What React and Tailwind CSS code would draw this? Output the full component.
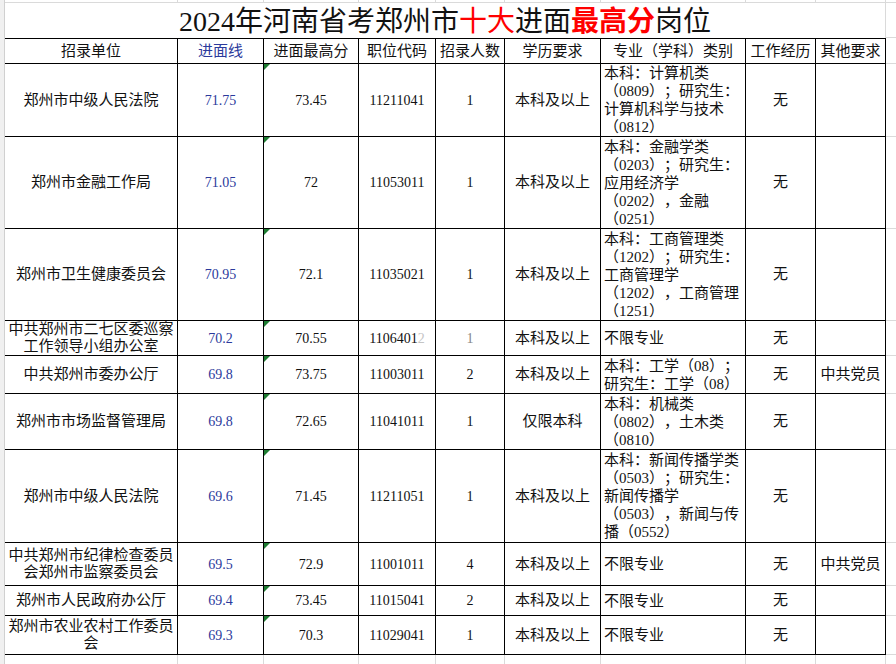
const cols = ["w-[173px]", "w-[86px]", "w-[95px]", "w-[77px]", "w-[69px]", "w-[96px]", "w-[145px]", "w-[70px]", "w-[70px]"];

const headers = ["招录单位", "进面线", "进面最高分", "职位代码", "招录人数", "学历要求", "专业（学科）类别", "工作经历", "其他要求"];

const rows = [
    { h: "h-[73px]", unit: ["郑州市中级人民法院"], line: "71.75", max: "73.45", code: "11211041", n: "1", edu: "本科及以上", major: ["本科：计算机类", "（0809）；研究生：", "计算机科学与技术", "（0812）"], other: "" },
    { h: "h-[92px]", unit: ["郑州市金融工作局"], line: "71.05", max: "72", code: "11053011", n: "1", edu: "本科及以上", major: ["本科：金融学类", "（0203）；研究生：", "应用经济学", "（0202），金融", "（0251）"], other: "" },
    { h: "h-[92px]", unit: ["郑州市卫生健康委员会"], line: "70.95", max: "72.1", code: "11035021", n: "1", edu: "本科及以上", major: ["本科：工商管理类", "（1202）；研究生：", "工商管理学", "（1202），工商管理", "（1251）"], other: "" },
    { h: "h-[35px]", unit: ["中共郑州市二七区委巡察", "工作领导小组办公室"], line: "70.2", max: "70.55", code: "1106401", codeFade: "2", n: "1", nFade: true, edu: "本科及以上", major: ["不限专业"], other: "" },
    { h: "h-[38px]", unit: ["中共郑州市委办公厅"], line: "69.8", max: "73.75", code: "11003011", n: "2", edu: "本科及以上", major: ["本科：工学（08）；", "研究生：工学（08）"], other: "中共党员" },
    { h: "h-[56px]", unit: ["郑州市市场监督管理局"], line: "69.8", max: "72.65", code: "11041011", n: "1", edu: "仅限本科", major: ["本科：机械类", "（0802），土木类", "（0810）"], other: "" },
    { h: "h-[93px]", unit: ["郑州市中级人民法院"], line: "69.6", max: "71.45", code: "11211051", n: "1", edu: "本科及以上", major: ["本科：新闻传播学类", "（0503）；研究生：", "新闻传播学", "（0503），新闻与传", "播（0552）"], other: "" },
    { h: "h-[43px]", unit: ["中共郑州市纪律检查委员", "会郑州市监察委员会"], line: "69.5", max: "72.9", code: "11001011", n: "4", edu: "本科及以上", major: ["不限专业"], other: "中共党员" },
    { h: "h-[30px]", unit: ["郑州市人民政府办公厅"], line: "69.4", max: "73.45", code: "11015041", n: "2", edu: "本科及以上", major: ["不限专业"], other: "" },
    { h: "h-[39px]", unit: ["郑州市农业农村工作委员", "会"], line: "69.3", max: "70.3", code: "11029041", n: "1", edu: "本科及以上", major: ["不限专业"], other: "" },
];

const GridRow = ({ h }) => (
    <div className={`flex shrink-0 ${h}`}>
        {cols.map((w, i) => (
            <div key={i} className={`${w} shrink-0 border-r border-b border-[#dadada]`} />
        ))}
        <div className="w-[10px] shrink-0 border-b border-[#dadada]" />
    </div>
);

const App = () => {
    const cell = "shrink-0 border-r border-b border-black flex items-center justify-center";
    return (
        <div className="w-[896px] h-[664px] overflow-hidden bg-white flex text-[#111] [text-spacing-trim:space-all] font-['Liberation_Serif','Noto_Sans_CJK_SC',serif]">
            {/* row header strip */}
            <div className="w-[5px] shrink-0 bg-[#f0f0f0] border-r border-[#d0d0d0]" />

            <div className="flex flex-col w-[891px]">
                {/* top gridline strip */}
                <GridRow h="h-[3px]" />

                {/* title */}
                <div className="flex shrink-0 h-[35px]">
                    <div className="w-[881px] shrink-0 border-r border-[#dadada] flex items-center justify-center text-[28px] leading-none pt-[2px]">
                        <span>2024年河南省考郑州市</span>
                        <span className="text-[#ff0000]">十大</span>
                        <span>进面</span>
                        <span className="text-[#ff0000] font-bold">最高分</span>
                        <span>岗位</span>
                    </div>
                    <div className="w-[10px] shrink-0 border-b border-[#dadada]" />
                </div>

                {/* header */}
                <div className="flex shrink-0 h-[26px]">
                    {headers.map((t, i) => (
                        <div key={i} className={`${cols[i]} ${cell} border-t text-[15px] ${i === 1 ? "text-[#2b3a9c]" : ""}`}>
                            {t}
                        </div>
                    ))}
                    <div className="w-[10px] shrink-0 border-b border-[#dadada]" />
                </div>

                {/* data rows */}
                {rows.map((r, idx) => (
                    <div key={idx} className={`flex shrink-0 ${r.h}`}>
                        <div className={`${cols[0]} ${cell} flex-col text-[15px] leading-[17px] text-center`}>
                            {r.unit.map((u, j) => <div key={j} className="whitespace-nowrap">{u}</div>)}
                        </div>
                        <div className={`${cols[1]} ${cell} text-[14px] text-[#2b3a9c]`}>{r.line}</div>
                        <div className={`${cols[2]} ${cell} relative text-[14px]`}>
                            <div className="absolute left-0 top-0 w-0 h-0 border-t-[6px] border-r-[6px] border-t-[#1e7d32] border-r-transparent" />
                            {r.max}
                        </div>
                        <div className={`${cols[3]} ${cell} text-[14px]`}>
                            {r.code}
                            {r.codeFade && <span className="text-[#c4c4c4]">{r.codeFade}</span>}
                        </div>
                        <div className={`${cols[4]} ${cell} text-[14px] ${r.nFade ? "text-[#888]" : ""}`}>{r.n}</div>
                        <div className={`${cols[5]} ${cell} text-[15px]`}>{r.edu}</div>
                        <div className={`${cols[6]} shrink-0 border-r border-b border-black flex flex-col justify-center pl-[3px] text-[15px] leading-[18px]`}>
                            {r.major.map((m, j) => <div key={j} className="whitespace-nowrap">{m}</div>)}
                        </div>
                        <div className={`${cols[7]} ${cell} text-[15px]`}>无</div>
                        <div className={`${cols[8]} ${cell} text-[15px]`}>{r.other}</div>
                        <div className="w-[10px] shrink-0 border-b border-[#dadada]" />
                    </div>
                ))}

                {/* empty rows below */}
                <GridRow h="h-[30px]" />
            </div>
        </div>
    );
};

export default App;
